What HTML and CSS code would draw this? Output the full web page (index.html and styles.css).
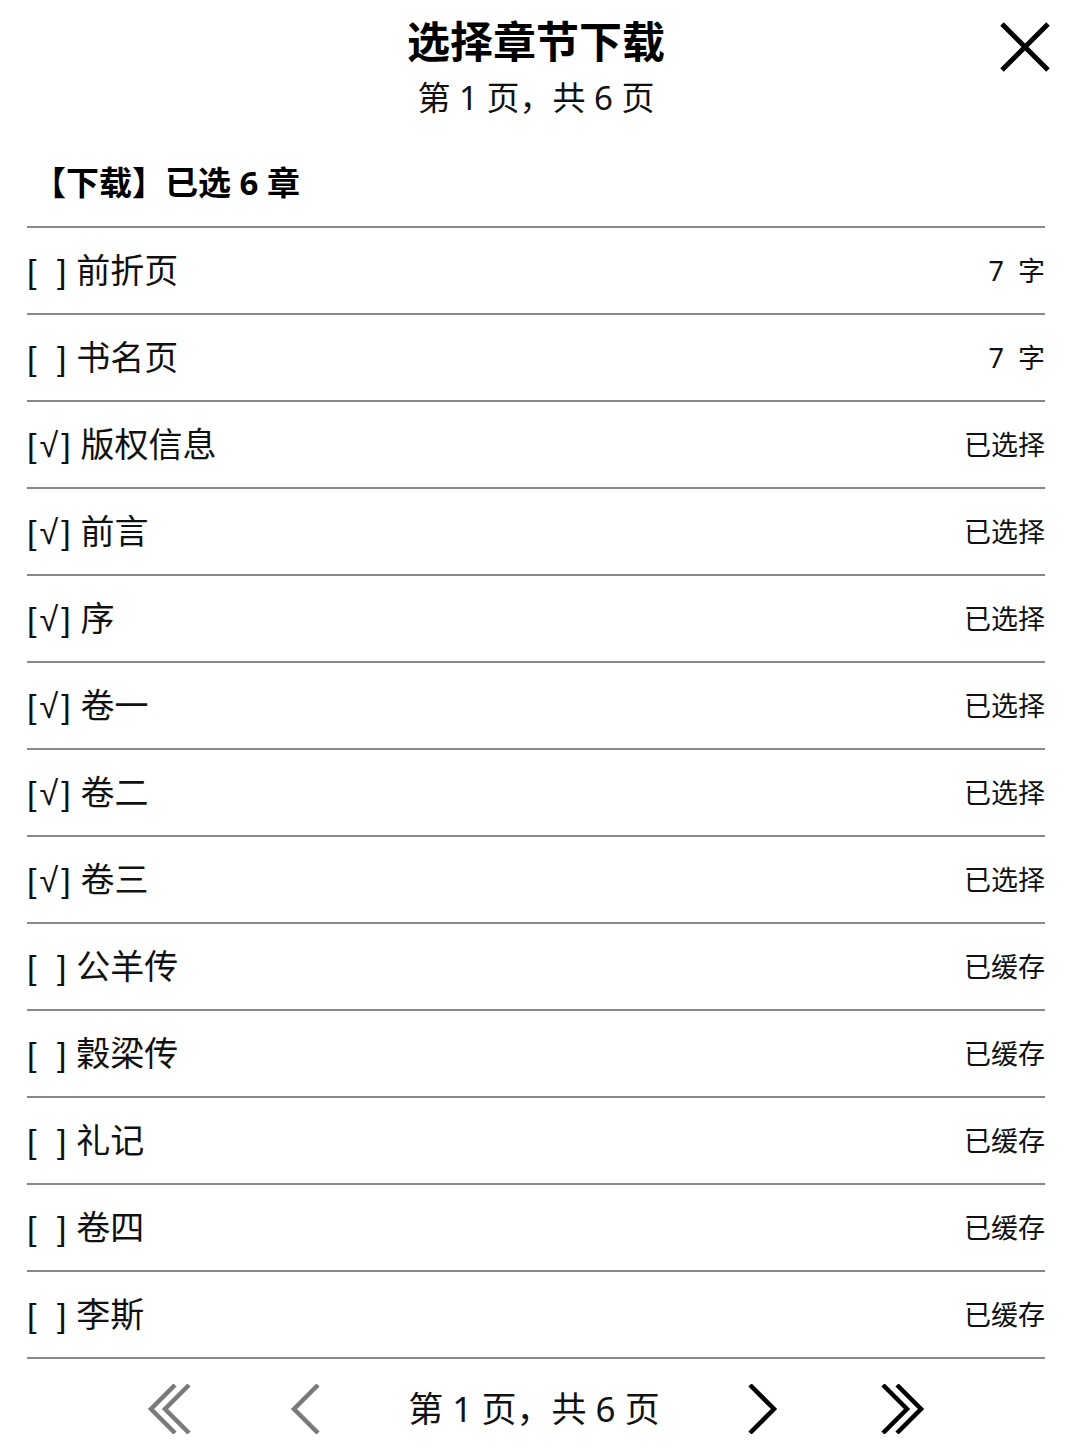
FILE: index.html
```html
<!DOCTYPE html>
<html lang="zh-CN">
<head>
<meta charset="utf-8">
<title>选择章节下载</title>
<link rel="stylesheet" href="styles.css">
</head>
<body>
<div class="page">
  <header class="header">
    <div class="header-spacer"></div>
    <div class="header-center">
      <h1 class="title">选择章节下载</h1>
      <div class="subtitle">第 1 页，共 6 页</div>
    </div>
    <div class="header-right">
      <svg class="close" width="52" height="52" viewBox="0 0 52 52" aria-label="关闭">
        <path d="M3 3 L49 49 M49 3 L3 49" stroke="#000" stroke-width="5" fill="none"/>
      </svg>
    </div>
  </header>

  <div class="list">
    <div class="section">【下载】已选 6 章</div>
    <div class="row"><span class="name"><span class="mark off">[ ]</span> 前折页</span><span class="meta">7&nbsp; 字</span></div>
    <div class="row"><span class="name"><span class="mark off">[ ]</span> 书名页</span><span class="meta">7&nbsp; 字</span></div>
    <div class="row"><span class="name"><span class="mark on">[<span class="tick">√</span>]</span> 版权信息</span><span class="meta">已选择</span></div>
    <div class="row"><span class="name"><span class="mark on">[<span class="tick">√</span>]</span> 前言</span><span class="meta">已选择</span></div>
    <div class="row"><span class="name"><span class="mark on">[<span class="tick">√</span>]</span> 序</span><span class="meta">已选择</span></div>
    <div class="row"><span class="name"><span class="mark on">[<span class="tick">√</span>]</span> 卷一</span><span class="meta">已选择</span></div>
    <div class="row"><span class="name"><span class="mark on">[<span class="tick">√</span>]</span> 卷二</span><span class="meta">已选择</span></div>
    <div class="row"><span class="name"><span class="mark on">[<span class="tick">√</span>]</span> 卷三</span><span class="meta">已选择</span></div>
    <div class="row"><span class="name"><span class="mark off">[ ]</span> 公羊传</span><span class="meta">已缓存</span></div>
    <div class="row"><span class="name"><span class="mark off">[ ]</span> 穀梁传</span><span class="meta">已缓存</span></div>
    <div class="row"><span class="name"><span class="mark off">[ ]</span> 礼记</span><span class="meta">已缓存</span></div>
    <div class="row"><span class="name"><span class="mark off">[ ]</span> 卷四</span><span class="meta">已缓存</span></div>
    <div class="row"><span class="name"><span class="mark off">[ ]</span> 李斯</span><span class="meta">已缓存</span></div>
  </div>

  <nav class="pager">
    <svg class="nav-first" width="44" height="50" viewBox="0 0 44 50" aria-label="第一页">
      <path d="M28 1 L4 25 L28 49 M42 1 L18 25 L42 49" stroke="#7a7a7a" stroke-width="4.5" fill="none"/>
    </svg>
    <svg class="nav-prev" width="30" height="50" viewBox="0 0 30 50" aria-label="上一页">
      <path d="M28 1 L4 25 L28 49" stroke="#7a7a7a" stroke-width="4.5" fill="none"/>
    </svg>
    <span class="pager-text">第 1 页，共 6 页</span>
    <svg class="nav-next" width="30" height="50" viewBox="0 0 30 50" aria-label="下一页">
      <path d="M2 1 L26 25 L2 49" stroke="#000" stroke-width="4.5" fill="none"/>
    </svg>
    <svg class="nav-last" width="44" height="50" viewBox="0 0 44 50" aria-label="最后一页">
      <path d="M2 1 L26 25 L2 49 M16 1 L40 25 L16 49" stroke="#000" stroke-width="4.5" fill="none"/>
    </svg>
  </nav>
</div>
</body>
</html>
```

FILE: styles.css
```css
html, body {
  margin: 0;
  padding: 0;
  background: #fff;
}

body {
  font-family: "Noto Sans", "Noto Sans CJK SC", sans-serif;
  color: #000;
}

.page {
  width: 1072px;
}

.header {
  display: grid;
  grid-template-columns: 1fr auto 1fr;
  height: 118px;
}

.header-center {
  display: flex;
  flex-direction: column;
  align-items: center;
  padding-top: 17px;
}

.title {
  margin: 0;
  font-size: 43px;
  font-weight: 700;
  line-height: 50px;
  height: 50px;
}

.subtitle {
  margin-top: 11px;
  font-size: 33px;
  line-height: 40px;
  height: 40px;
  color: #111;
}

.header-right {
  display: flex;
  justify-content: flex-end;
  align-items: flex-start;
  padding-top: 21px;
  padding-right: 21px;
}

.close {
  display: block;
}

.list {
  margin: 0 27px;
}

.section {
  height: 110px;
  box-sizing: border-box;
  padding: 45px 0 0 6px;
  font-size: 33px;
  font-weight: 700;
  line-height: 40px;
  border-bottom: 2px solid #888;
}

.row {
  display: flex;
  justify-content: space-between;
  align-items: center;
  height: 87px;
  box-sizing: border-box;
  border-bottom: 2px solid #888;
}

.name {
  font-size: 34px;
  line-height: 40px;
  color: #111;
  word-spacing: 1px;
}

.mark {
  font-family: "Liberation Sans", "DejaVu Sans", sans-serif;
}

.mark.off {
  word-spacing: 11px;
}

.tick {
  padding: 0 3px;
}

.meta {
  font-size: 27px;
  line-height: 34px;
  color: #111;
}

.pager {
  display: flex;
  justify-content: center;
  align-items: center;
  height: 100px;
}

.pager svg {
  display: block;
}

.nav-first {
  margin-right: 99px;
}

.nav-prev {
  margin-right: 88px;
}

.pager-text {
  font-size: 35px;
  line-height: 40px;
  color: #111;
}

.nav-next {
  margin-left: 88px;
  margin-right: 103px;
}
```
